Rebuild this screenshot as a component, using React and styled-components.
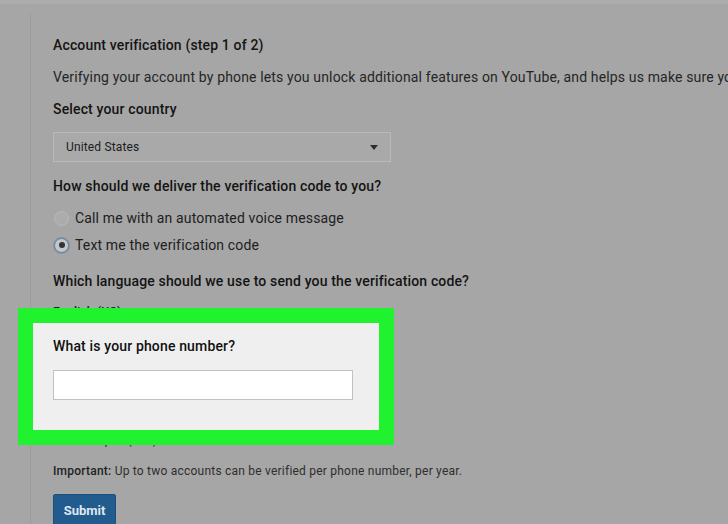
import React from "react";
import styled, { createGlobalStyle } from "styled-components";

const Global = createGlobalStyle`
  html, body { margin: 0; padding: 0; }
  body {
    background: #a6a6a6;
    font-family: Roboto, "Liberation Sans", Arial, sans-serif;
    -webkit-font-smoothing: antialiased;
  }
`;

const Page = styled.div`
  position: relative;
  width: 728px;
  height: 524px;
  overflow: hidden;
  background: #a6a6a6;
`;

const TopBand = styled.div`
  height: 4px;
  background: #acacac;
`;

const Main = styled.main`
  margin: 10px 0 0 30px;
  border-left: 1px solid #9c9c9c;
  padding: 21px 0 0 22px;
  display: flex;
  flex-direction: column;
  align-items: flex-start;
  height: 600px;
  letter-spacing: 0.15px;
`;

const Title = styled.h1`
  margin: 0;
  font-size: 14px;
  line-height: 20px;
  font-weight: 500;
  color: #151515;
  white-space: nowrap;
`;

const Para = styled.p`
  margin: ${(p) => p.$mt || 0}px 0 0;
  font-size: 14px;
  line-height: 20px;
  color: #252525;
  white-space: nowrap;
`;

const Label = styled.div`
  margin-top: ${(p) => p.$mt || 0}px;
  font-size: 14px;
  line-height: 20px;
  font-weight: 500;
  color: #141414;
  white-space: nowrap;
  visibility: ${(p) => (p.$hidden ? "hidden" : "visible")};
`;

const SelectBox = styled.div`
  margin-top: 13px;
  box-sizing: border-box;
  width: 338px;
  height: 30px;
  padding: 0 12px;
  display: flex;
  align-items: center;
  justify-content: space-between;
  background: #a9a9a9;
  border: 1px solid #bababa;
  font-size: 12px;
  color: #1c1c1c;
`;

const Caret = styled.span`
  width: 0;
  height: 0;
  border-left: 4.5px solid transparent;
  border-right: 4.5px solid transparent;
  border-top: 5px solid #2e2e2e;
`;

const RadioRow = styled.label`
  margin-top: ${(p) => p.$mt}px;
  display: flex;
  align-items: center;
  gap: 6px;
  height: 20px;
  font-size: 14px;
  color: #202020;
  white-space: nowrap;
  padding-left: 1px;
`;

const RadioDot = styled.span`
  box-sizing: border-box;
  width: 15px;
  height: 15px;
  border-radius: 50%;
  border: 1px solid ${(p) => (p.$on ? "#62809f" : "#b9b9b9")};
  background: ${(p) => (p.$on ? "#c4c6c9" : "#acacac")};
  display: flex;
  align-items: center;
  justify-content: center;
  box-shadow: ${(p) => (p.$on ? "0 0 0 1px rgba(90,125,165,0.45)" : "none")};
  &::after {
    content: "";
    display: ${(p) => (p.$on ? "block" : "none")};
    width: 6px;
    height: 6px;
    border-radius: 50%;
    background: #333;
  }
`;

const SmallText = styled.div`
  margin-top: ${(p) => p.$mt || 0}px;
  font-size: 12px;
  line-height: 16px;
  letter-spacing: 0.22px;
  color: ${(p) => p.$color || "#2e2e2e"};
  font-weight: ${(p) => p.$weight || 400};
  white-space: nowrap;
  b { font-weight: 500; color: #222; }
`;

const PhoneInput = styled.div`
  margin-top: ${(p) => p.$mt || 0}px;
  box-sizing: border-box;
  width: 300px;
  height: 30px;
  background: #ffffff;
  border: 1px solid #c2c2c2;
  visibility: ${(p) => (p.$hidden ? "hidden" : "visible")};
`;

const SubmitButton = styled.button`
  margin-top: 15px;
  width: 63px;
  height: 34px;
  border: 1px solid #1b4f7c;
  border-radius: 2px;
  background: #225c8e;
  color: #dfe7ef;
  font-family: inherit;
  font-size: 13px;
  font-weight: 700;
  padding: 0 0 2px;
`;

const Highlight = styled.section`
  position: absolute;
  left: 18px;
  top: 308px;
  width: 376px;
  height: 137px;
  box-sizing: border-box;
  border: 15px solid #21f230;
  background: #efefef;
  padding: 13px 0 0 20px;
  display: flex;
  flex-direction: column;
  align-items: flex-start;
  letter-spacing: 0.15px;
`;

const HighlightLabel = styled.div`
  font-size: 14px;
  line-height: 20px;
  font-weight: 500;
  color: #111;
`;

export default function App() {
  return (
    <Page>
      <Global />
      <TopBand />
      <Main>
        <Title>Account verification (step 1 of 2)</Title>
        <Para $mt={12}>
          Verifying your account by phone lets you unlock additional features on YouTube, and helps us make sure you're not a robot.
        </Para>
        <Label $mt={12}>Select your country</Label>
        <SelectBox>
          <span>United States</span>
          <Caret />
        </SelectBox>
        <Label $mt={14}>How should we deliver the verification code to you?</Label>
        <RadioRow $mt={12}>
          <RadioDot />
          Call me with an automated voice message
        </RadioRow>
        <RadioRow $mt={7}>
          <RadioDot $on />
          Text me the verification code
        </RadioRow>
        <Label $mt={16}>Which language should we use to send you the verification code?</Label>
        <SmallText $mt={13} $weight={500} $color="#222">English (US)</SmallText>
        <Label $mt={18} $hidden>What is your phone number?</Label>
        <PhoneInput $mt={14} $hidden />
        <SmallText $mt={30}>For example: (201) 555-5555</SmallText>
        <SmallText $mt={15}>
          <b>Important:</b> Up to two accounts can be verified per phone number, per year.
        </SmallText>
        <SubmitButton>Submit</SubmitButton>
      </Main>
      <Highlight>
        <HighlightLabel>What is your phone number?</HighlightLabel>
        <PhoneInput $mt={14} />
      </Highlight>
    </Page>
  );
}
